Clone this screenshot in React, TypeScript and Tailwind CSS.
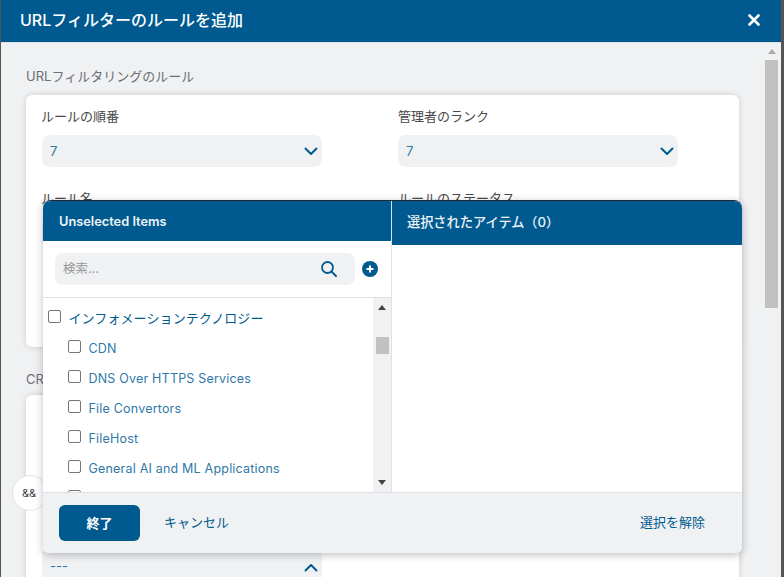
import React from "react";

const font = { fontFamily: '"Inter", "Noto Sans CJK JP", sans-serif' };

function Chevron({ up = false }: { up?: boolean }) {
  return (
    <svg width="14" height="9" viewBox="0 0 14 9" fill="none" className={up ? "rotate-180" : ""}>
      <path d="M1.5 1.5 7 7l5.5-5.5" stroke="#005a8f" strokeWidth="2" strokeLinecap="round" strokeLinejoin="round" />
    </svg>
  );
}

function Select({ value }: { value: string }) {
  return (
    <div className="flex h-8 w-[280px] items-center justify-between rounded-lg bg-[#f0f1f3] pl-2 pr-[3px] text-[13px] text-[#2f78a8]">
      <span className="pt-[2px]">{value}</span>
      <span className="flex w-[16px] justify-center"><Chevron /></span>
    </div>
  );
}

function Field({ label, value, first = false }: { label: string; value: string; first?: boolean }) {
  return (
    <div className="flex w-[280px] flex-col">
      <div className={`h-[30px] pt-[2px] text-[13px] leading-[18px] text-[#484848] ${first ? "-ml-px" : ""}`}>{label}</div>
      <Select value={value} />
    </div>
  );
}

function Check({ label, child = false }: { label: string; child?: boolean }) {
  return (
    <div className={`flex h-[30px] shrink-0 items-center ${child ? "pl-[25px] text-[#2f78a8]" : "pl-[5px] text-[#005a8f]"}`}>
      <span className="mb-[3px] mr-[7.5px] h-[13px] w-[13px] shrink-0 rounded-[2px] border border-[#767676] bg-white" />
      {label && <span className={child ? "mt-[3px] text-[12.5px] tracking-[0.2px]" : "mt-[1px] text-[13px] tracking-[0.1px]"}>{label}</span>}
    </div>
  );
}

export default function App() {
  return (
    <div style={font} className="relative h-[577px] w-[784px] overflow-hidden bg-[#555]">
      <div className="ml-px flex h-[577px] w-[780px] flex-col bg-[#f0f1f3]">
        <div className="flex h-[43px] shrink-0 items-center justify-between border-b border-[#dfe1e5] bg-[#005a8f] pb-[3px] pl-[19px] pr-[21px] text-white">
          <span className="text-[16px] font-medium">URLフィルターのルールを追加</span>
          <svg width="12" height="12" viewBox="0 0 12 12"><path d="M1.5 1.5l9 9m0-9l-9 9" stroke="#fff" strokeWidth="2.6" strokeLinecap="round" /></svg>
        </div>
        <div className="flex min-h-0 flex-1">
          <div className="min-w-0 flex-1 overflow-hidden pl-[25px] pr-[26px]">
            <div className="h-[52px] pt-[24px] text-[13px] leading-[18px] text-[#6b6f75]">URLフィルタリングのルール</div>
            <div className="h-[252px] rounded-md bg-white pl-[16px] pr-[16px] pt-[10px] shadow-[0_0_6px_rgba(0,0,0,0.15)]">
              <div className="flex gap-[76px]">
                <Field first label="ルールの順番" value="7" />
                <Field label="管理者のランク" value="7" />
              </div>
              <div className="mt-[20px] flex gap-[76px]">
                <Field first label="ルール名" value="" />
                <Field label="ルールのステータス" value="" />
              </div>
            </div>
            <div className="h-[48px] pt-[23px] text-[13px] leading-[18px] text-[#6b6f75]">CRITERIA</div>
            <div className="h-[300px] rounded-md bg-white pl-[16px] pt-[156px] shadow-[0_0_6px_rgba(0,0,0,0.15)]">
              <div className="flex h-8 w-[280px] items-center justify-between bg-[#f0f1f3] pl-2 pr-[3px] text-[13px] text-[#2f78a8]">
                <span>---</span>
                <span className="flex w-[16px] justify-center"><Chevron up /></span>
              </div>
            </div>
          </div>
          <div className="flex w-[16px] shrink-0 flex-col items-center pr-[3px]">
            <span className="mt-[6px] h-0 w-0 border-x-[4px] border-b-[5px] border-x-transparent border-b-[#a8a8a8]" />
            <span className="mt-[6px] h-[248px] w-[13px] bg-[#c1c1c1]" />
          </div>
        </div>
      </div>

      <div className="absolute left-[12px] top-[475px] flex h-9 w-9 items-center justify-center rounded-full border border-[#e3e4e6] bg-white pr-[2px] text-[11px] text-[#333]">&amp;&amp;</div>

      <div className="absolute left-[43px] top-[200px] flex h-[353px] w-[699px] flex-col overflow-hidden rounded-b-md rounded-t-lg border-t border-[#1f2a33] bg-white shadow-[0_2px_8px_rgba(0,0,0,0.25)]">
        <div className="flex min-h-0 flex-1">
          <div className="flex w-[349px] shrink-0 flex-col border-r border-[#dfe1e5]">
            <div className="flex h-10 shrink-0 items-center bg-[#005a8f] pl-[16px] pt-px text-[12.8px] font-semibold text-[#eef4f8]">Unselected Items</div>
            <div className="flex h-[57px] shrink-0 items-center border-b border-[#dfe1e5] pb-px pl-[12px]">
              <div className="flex h-8 w-[300px] items-center justify-between rounded-lg bg-[#f0f1f3] pl-2 pr-[17px] text-[12.5px] text-[#999]">
                <span className="pt-px">検索...</span>
                <svg width="18" height="18" viewBox="0 0 18 18" fill="none"><circle cx="7.5" cy="7.5" r="5.5" stroke="#005a8f" strokeWidth="1.8" /><path d="M11.6 11.6 16 16" stroke="#005a8f" strokeWidth="2" strokeLinecap="round" /></svg>
              </div>
              <svg className="ml-[7px]" width="16" height="16" viewBox="0 0 16 16"><circle cx="8" cy="8" r="8" fill="#005a8f" /><path d="M8 4.5v7M4.5 8h7" stroke="#fff" strokeWidth="2" /></svg>
            </div>
            <div className="flex min-h-0 flex-1">
              <div className="min-w-0 flex-1 overflow-hidden pt-[5px]">
                <Check label="インフォメーションテクノロジー" />
                <Check child label="CDN" />
                <Check child label="DNS Over HTTPS Services" />
                <Check child label="File Convertors" />
                <Check child label="FileHost" />
                <Check child label="General AI and ML Applications" />
                <Check child label="" />
              </div>
              <div className="flex w-[18px] shrink-0 flex-col items-center bg-[#f0f1f3]">
                <span className="mt-[7px] h-0 w-0 border-x-[4px] border-b-[5px] border-x-transparent border-b-[#444]" />
                <span className="mt-[27px] h-[17px] w-[13px] bg-[#c1c1c1]" />
                <span className="mt-auto mb-[7px] h-0 w-0 border-x-[4px] border-t-[5px] border-x-transparent border-t-[#444]" />
              </div>
            </div>
          </div>
          <div className="min-w-0 flex-1">
            <div className="flex h-[44px] items-center bg-[#005a8f] pl-[15px] text-[13.2px] font-medium text-[#eef4f8]">選択されたアイテム（0）</div>
          </div>
        </div>
        <div className="flex h-[61px] shrink-0 items-center border-t border-[#dfe1e5] bg-[#f0f1f3] pl-[16px] pr-[37px] text-[13px] text-[#005a8f]">
          <div className="flex h-9 w-[81px] items-center justify-center rounded-md bg-[#005a8f] pt-px font-semibold text-white">終了</div>
          <span className="ml-[24px]">キャンセル</span>
          <span className="ml-auto">選択を解除</span>
        </div>
      </div>
    </div>
  );
}
